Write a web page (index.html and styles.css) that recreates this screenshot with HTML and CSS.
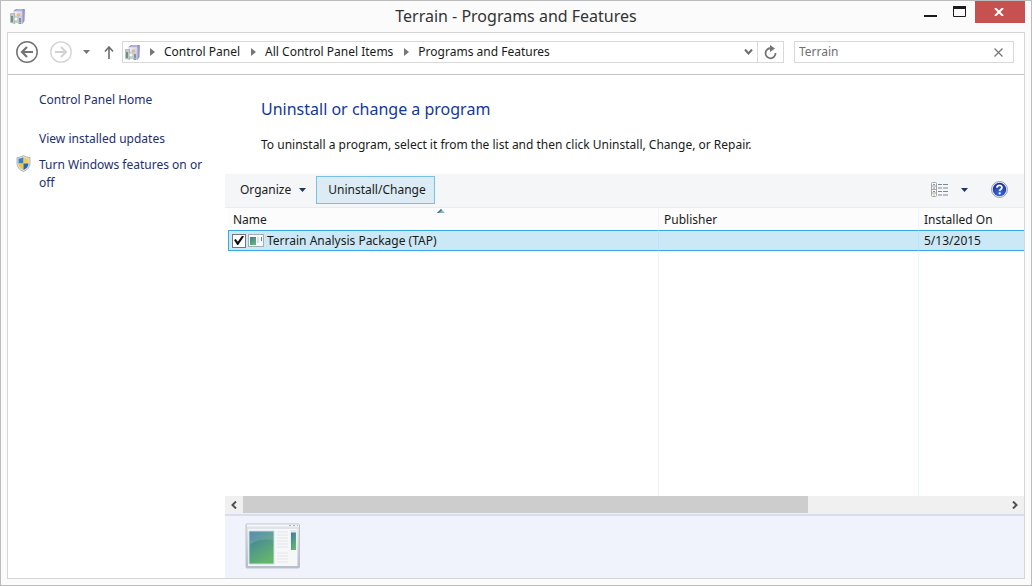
FILE: index.html
```html
<!DOCTYPE html>
<html lang="en">
<head>
<meta charset="utf-8">
<title>Terrain - Programs and Features</title>
<link rel="stylesheet" href="styles.css">
</head>
<body>
<svg class="defs" aria-hidden="true">
  <defs>
    <linearGradient id="boxFace" x1="0" y1="0" x2="1" y2="1"><stop offset="0" stop-color="#f4f5fe"/><stop offset="1" stop-color="#b9badf"/></linearGradient>
    <linearGradient id="pane" x1="0" y1="0" x2="0.5" y2="1"><stop offset="0" stop-color="#4078a6"/><stop offset="1" stop-color="#62b56c"/></linearGradient>
    <linearGradient id="chrome" x1="0" y1="0" x2="0" y2="1"><stop offset="0" stop-color="#e4e8ed"/><stop offset="1" stop-color="#b5bdc7"/></linearGradient>
    <radialGradient id="helpBlue" cx="0.5" cy="0.75" r="0.7"><stop offset="0" stop-color="#3f6fe0"/><stop offset="1" stop-color="#192f98"/></radialGradient>
    <symbol id="programs" viewBox="0 0 16 17">
      <path d="M3.500 3 6 1h9l-2 2.500z" fill="#8c8ac2"/>
      <path d="M5.500 2.500 7 1.500h6l-1 1z" fill="#d8d9f0"/>
      <path d="M4 3h8.500v12.500L4 14z" fill="url(#boxFace)" stroke="#b8b8da" stroke-width="0.600"/>
      <path d="m12.500 3.500 2.500-2.500-.5 12-2 3z" fill="#9598c8"/>
      <path d="M.5 5.500h4l.5 10-4.500-1z" fill="#c3cbc8" stroke="#8b9894" stroke-width="0.500"/>
      <path d="M1 8h2v6H1z" fill="#739183"/>
      <circle cx="8.500" cy="7" r="1.800" fill="#ebb775"/>
      <path d="M5 8.500h5V15H5z" fill="#c9ced1"/>
      <circle cx="6" cy="11" r="2" fill="#fafafa" stroke="#a3afb4" stroke-width="0.600"/>
      <path d="M9 10h2v4H9z" fill="#8a929c"/><path d="m8 14.500 3 .2v1.300H9z" fill="#59b56c"/>
    </symbol>
    <symbol id="down" viewBox="0 0 7 4"><path d="M0 0h7L3.500 4z" fill="currentColor"/></symbol>
    <symbol id="right" viewBox="0 0 5 8"><path d="M0 0v8l5-4z" fill="#777"/></symbol>
  </defs>
</svg>
<div class="window">
  <header class="titlebar">
    <svg class="app-icon" aria-hidden="true"><use href="#programs"/></svg>
    <h1 class="title">Terrain - Programs and Features</h1>
    <div class="controls">
      <button class="control" aria-label="Minimize"><svg width="13" height="12" viewBox="0 0 13 12"><path d="M0 9h13v2H0z" fill="#1c1c1c"/></svg></button>
      <button class="control" aria-label="Maximize"><svg width="13" height="12" viewBox="0 0 13 12"><path d="M.5 1v9.500h12V1" fill="none" stroke="#1c1c1c"/><path d="M0 0h13v3H0z" fill="#1c1c1c"/></svg></button>
      <button class="control close" aria-label="Close"><svg width="10" height="8" viewBox="0 0 10 8"><path d="m1 0 8 8M9 0 1 8" stroke="#fff" stroke-width="2"/></svg></button>
    </div>
  </header>
  <div class="frame">
    <nav class="navbar">
      <button class="plain round" aria-label="Back"><svg width="22" height="22" viewBox="0 0 22 22" fill="none" stroke="#737373"><circle cx="11" cy="11" r="10.200" stroke-width="1.500"/><path d="M17 11H6m5-5-5 5 5 5" stroke-width="2.200"/></svg></button>
      <button class="plain round forward" aria-label="Forward"><svg width="22" height="22" viewBox="0 0 22 22" fill="none" stroke="#d2d2d2"><circle cx="11" cy="11" r="10.200" stroke-width="1.300"/><path d="M5 11h11m-5-5 5 5-5 5" stroke-width="2"/></svg></button>
      <button class="plain recent" aria-label="Recent locations"><svg width="7" height="4"><use href="#down"/></svg></button>
      <button class="plain up" aria-label="Up"><svg width="10" height="13" viewBox="0 0 10 13" fill="none" stroke="#6c6c6c" stroke-width="1.600"><path d="M5 13V1M1 5.500l4-4.500 4 4.500"/></svg></button>
      <div class="address">
        <svg class="place-icon" aria-hidden="true"><use href="#programs"/></svg>
        <svg class="sep"><use href="#right"/></svg>
        <a class="crumb" href="#">Control Panel</a>
        <svg class="sep"><use href="#right"/></svg>
        <a class="crumb" href="#">All Control Panel Items</a>
        <svg class="sep"><use href="#right"/></svg>
        <a class="crumb" href="#">Programs and Features</a>
        <button class="plain history" aria-label="Previous locations"><svg width="9" height="6" viewBox="0 0 9 6"><path d="m1 .5 3.500 4 3.500-4" fill="none" stroke="#6c6c6c" stroke-width="2"/></svg></button>
        <button class="plain refresh" aria-label="Refresh"><svg width="13" height="15" viewBox="0 0 13 15"><path d="M7 3.300A5 5 0 1 0 11.500 8" fill="none" stroke="#747474" stroke-width="1.800"/><path d="m6 0 5 3.500L6 7z" fill="#747474"/></svg></button>
      </div>
      <div class="search">
        <input class="search-input" type="text" value="Terrain" aria-label="Search Programs and Features">
        <button class="plain clear" aria-label="Clear search"><svg width="9" height="9" viewBox="0 0 9 9"><path d="m.5.5 8 8M8.500.5l-8 8" stroke="#777" stroke-width="1.300"/></svg></button>
      </div>
    </nav>
    <div class="body">
      <aside class="sidebar">
        <a class="task home" href="#">Control Panel Home</a>
        <a class="task" href="#">View installed updates</a>
        <a class="task shielded" href="#">
          <svg class="shield" viewBox="0 0 14 17" aria-hidden="true">
            <path d="M7 .5c2 1.300 4 1.900 6.500 2V8c0 4-2.500 7-6.500 8.500C3 15 .5 12 .5 8V2.500C3 2.400 5 1.800 7 .5z" fill="#dfe3e7" stroke="#9ba5ad" stroke-width="0.800"/>
            <path d="M7 2c-1.500 1-3.300 1.500-5 1.600V8.500h5z" fill="#3d7fc7"/><path d="M7 2c1.500 1 3.300 1.500 5 1.600V8.500H7z" fill="#f6cf4e"/>
            <path d="M2 8.500h5V15c-3-1.300-5-3.500-5-6.500z" fill="#f2c440"/><path d="M12 8.500H7V15c3-1.300 5-3.500 5-6.500z" fill="#2866ad"/>
          </svg>Turn Windows features on or off</a>
      </aside>
      <main class="main">
        <div class="intro">
          <h2 class="heading">Uninstall or change a program</h2>
          <p class="lead">To uninstall a program, select it from the list and then click Uninstall, Change, or Repair.</p>
        </div>
        <div class="toolbar">
          <button class="plain organize">Organize <svg width="7" height="4"><use href="#down"/></svg></button>
          <button class="command">Uninstall/Change</button>
          <div class="tools">
            <button class="plain" aria-label="Change your view"><svg width="18" height="15" viewBox="0 0 18 15">
              <rect x=".5" y=".5" width="5" height="14" rx="1" fill="#f9fafb" stroke="#a0a7af"/><path d="M1 4h4M1 7.500h4M1 11h4" stroke="#a0a7af"/>
              <path d="M2 2.500h2" stroke="#7ca88d"/><path d="M2 6h2" stroke="#df6767"/><path d="M2 9.500h2" stroke="#5797d8"/><path d="M2 13h2" stroke="#d8c443"/>
              <path d="M7 2.500h4m1 0h5M7 6h4m1 0h5M7 9.500h4m1 0h5M7 13h4m1 0h5" stroke="#7b8796"/></svg></button>
            <button class="plain" aria-label="More view options"><svg width="7" height="4"><use href="#down"/></svg></button>
            <button class="plain help" aria-label="Help"><svg width="17" height="17" viewBox="0 0 17 17"><circle cx="8.500" cy="8.500" r="8" fill="#e8eaef" stroke="#888d98" stroke-width="0.800"/><circle cx="8.500" cy="8.500" r="6.700" fill="url(#helpBlue)"/><path d="M6 6.800C6 3.600 11 3.700 11 6.500c0 1.800-2.300 1.700-2.300 3.500" fill="none" stroke="#fff" stroke-width="1.700"/><circle cx="8.700" cy="12.300" r="1.100" fill="#fff"/></svg></button>
          </div>
        </div>
        <div class="list">
          <table class="programs">
            <colgroup><col class="col-name"><col class="col-publisher"><col></colgroup>
            <thead><tr><th class="sorted" aria-sort="ascending">Name<svg class="sort" viewBox="0 0 8 4" aria-hidden="true"><path d="M0 4 4 0l4 4z" fill="#84b7cd"/><path d="M0 4 4 0l1 1-3 3z" fill="#456f85"/></svg></th><th>Publisher</th><th>Installed On</th></tr></thead>
            <tbody>
              <tr class="selected">
                <td><label class="program"><input class="check" type="checkbox" checked><svg class="mini" viewBox="0 0 16 13" aria-hidden="true"><rect x=".5" y=".5" width="15" height="12" fill="#f7f8f9" stroke="#a5adb5"/><path d="M2 3h6v8H2z" fill="url(#pane)"/><path d="M9 4h2M9 6h2M9 8h2" stroke="#c5c9ce"/><path d="M13 3h1v4h-1z" fill="#4e888c"/></svg>Terrain Analysis Package (TAP)</label></td>
                <td></td><td>5/13/2015</td>
              </tr>
              <tr class="rest"><td></td><td></td><td></td></tr>
            </tbody>
          </table>
        </div>
        <div class="scrollbar">
          <button class="plain arrow" aria-label="Scroll left"><svg width="6" height="8" viewBox="0 0 6 8"><path d="M5 .5 1.500 4 5 7.500" fill="none" stroke="#505050" stroke-width="2"/></svg></button>
          <div class="track"><div class="thumb"></div></div>
          <button class="plain arrow" aria-label="Scroll right"><svg width="6" height="8" viewBox="0 0 6 8"><path d="M1 .5 4.500 4 1 7.500" fill="none" stroke="#505050" stroke-width="2"/></svg></button>
        </div>
        <footer class="details">
          <svg class="preview" width="56" height="46" viewBox="0 0 56 46" aria-hidden="true">
            <rect x="1" y="1" width="53.500" height="44" rx="1" fill="url(#chrome)" stroke="#bac2cc"/>
            <path d="M2 1.500h52v2H2z" fill="#f4f6f8"/><path d="M44 2.500h2m2 0h2m2 0h1" stroke="#a7b0ba"/>
            <path d="M3 6h49.500v37H3z" fill="#f6f7f8"/>
            <path d="M4 8h25v33H4z" fill="url(#pane)" stroke="#d2dbdf"/>
            <path d="M4.500 22Q12 15 28.500 17V8.500h-24z" fill="#fff" opacity=".13"/>
            <path d="M32 9h11M32 12h11M32 15h11M32 18h11M32 21h11M32 24h11M32 30h11M32 33h11M32 36h11M32 39h11" stroke="#e3e5e7"/>
            <path d="M45.500 7h6v20h-6z" fill="#e5e9eb"/><path d="M46 9.500h5V27h-5z" fill="url(#pane)"/>
          </svg>
        </footer>
      </main>
    </div>
  </div>
</div>
</body>
</html>
```
FILE: styles.css
```css
* { box-sizing: border-box; }
body {
  margin: 0;
  font-family: "Noto Sans", "Open Sans", sans-serif;
  font-size: 12px;
  line-height: 18px;
  color: #1a1a1a;
}
button, input { font: inherit; color: inherit; }
a { color: inherit; text-decoration: none; }
svg { display: block; flex: none; }
.defs { position: absolute; width: 0; height: 0; }

.window {
  display: flex;
  flex-direction: column;
  min-height: 100vh;
  padding: 0 6px 6px;
  border: 1px solid #bcbcbc;
  background: #fbfbfb;
}
.titlebar {
  display: grid;
  grid-template-columns: 1fr auto 1fr;
  height: 31px;
}
.app-icon { width: 16px; height: 17px; margin: 7px 0 0 3px; }
.title { margin: 3px 0 0; font-size: 16px; line-height: 24px; font-weight: 400; color: #333; }
.controls { display: flex; justify-content: flex-end; align-items: flex-start; }
.control {
  display: flex;
  justify-content: center;
  align-items: center;
  width: 29px;
  height: 22px;
  padding: 0 2px 0 0;
  border: 0;
  background: none;
}
.close { width: 50px; background: #c75050; }

.frame {
  display: flex;
  flex: 1;
  flex-direction: column;
  border: 1px solid #d5d5d5;
  background: #fff;
}
.plain {
  display: flex;
  justify-content: center;
  align-items: center;
  padding: 0;
  border: 0;
  background: none;
}
.navbar {
  display: flex;
  align-items: center;
  height: 42px;
  padding: 0 10px 3px 8px;
  border-bottom: 1px solid #c2c2c2;
}
.round { width: 22px; margin-right: 12px; }
.forward { margin-right: 7px; }
.recent { width: 14px; color: #777; }
.up { width: 29px; padding-left: 3px; }
.address, .search { display: flex; align-items: center; height: 22px; border: 1px solid #d9d9d9; }
.address { flex: 1; }
.place-icon { width: 16px; height: 17px; margin: 0 9px 0 2px; }
.sep { width: 5px; height: 8px; margin-right: 9px; }
.crumb { margin-right: 11px; white-space: nowrap; }
.history { width: 18px; height: 20px; margin-left: auto; }
.refresh { width: 26px; height: 20px; border-left: 1px solid #d9d9d9; }
.search { flex: 0 0 220px; margin-left: 10px; color: #707070; }
.search-input { flex: 1; min-width: 0; padding: 0 4px; border: 0; outline: 0; background: none; }
.clear { width: 30px; height: 20px; }

.body { display: flex; flex: 1; }
.sidebar { flex: 0 0 217px; padding: 16px 16px 0 31px; color: #1e2f6e; }
.task { display: block; margin-bottom: 8px; }
.home { margin-bottom: 21px; }
.shielded { position: relative; }
.shield { position: absolute; top: -1px; left: -23px; width: 15px; height: 17px; }
.main { display: flex; flex: 1; flex-direction: column; min-width: 0; }
.intro { padding: 22px 36px 20px; }
.heading { margin: 0 0 15px; font-size: 16px; line-height: 24px; font-weight: 400; color: #14389b; }
.lead { margin: 0; }
.toolbar {
  display: flex;
  align-items: center;
  height: 34px;
  padding: 0 16px 2px 15px;
  border-bottom: 1px solid #e9ebee;
  background: #f5f6f8;
}
.organize { gap: 8px; margin-right: 10px; }
.organize svg, .tools { color: #1e395b; }
.command { height: 28px; padding: 0 8px 0 11px; border: 1px solid #78c0e5; background: #dcebf4; }
.tools { display: flex; align-items: center; gap: 12px; margin-left: auto; }
.help { margin-left: 11px; }

.list { display: flex; flex: 1; padding-left: 3px; }
.programs { width: 100%; table-layout: fixed; border-collapse: separate; border-spacing: 0; }
.col-name { width: 431px; }
.col-publisher { width: 260px; }
.programs th, .programs td { padding: 0 5px; text-align: left; font-weight: 400; border-right: 1px solid #edf5fc; }
.programs th:last-child, .programs td:last-child { border-right: 0; }
.programs th { height: 22px; padding-top: 2px; background: #fcfcfc; }
.sorted { position: relative; }
.sort { position: absolute; top: 1px; left: 209px; width: 8px; height: 4px; }
.programs .selected td { height: 21px; background: #cbe8f6; border-color: #c0e1f3; border-top: 1px solid #38a7df; border-bottom: 1px solid #38a7df; }
.programs .selected td:first-child { padding-left: 3px; border-left: 1px solid #38a7df; }
.rest td { height: auto; }
.program { display: flex; align-items: center; }
.check {
  display: grid;
  place-items: center;
  width: 14px;
  height: 14px;
  margin: 0 2px 0 0;
  appearance: none;
  border: 1px solid #777;
  background: #fff;
}
.check:checked::before {
  content: "";
  width: 10px;
  height: 10px;
  background: #111;
  clip-path: polygon(0 45%, 18% 35%, 38% 62%, 82% 0, 100% 10%, 42% 95%, 32% 95%);
}
.mini { width: 16px; height: 13px; margin-right: 3px; }

.scrollbar { display: flex; height: 18px; background: #f0f0f0; }
.arrow { width: 18px; }
.track { flex: 1; }
.thumb { width: 74%; height: 17px; background: #cdcdcd; }
.details { height: 64px; padding: 7px 20px; border-top: 2px solid #d5dff0; background: #f0f3fb; }
```
